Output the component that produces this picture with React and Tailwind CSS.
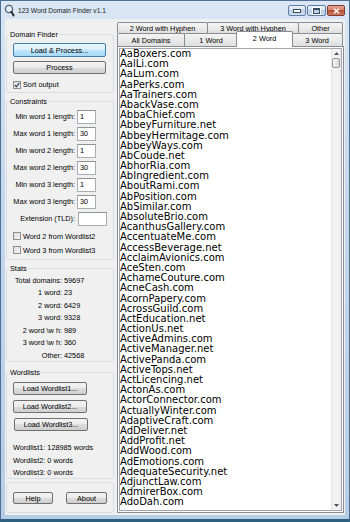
import React from "react";

const domains = [
  "AaBoxers.com","AalLi.com","AaLum.com","AaPerks.com","AaTrainers.com","AbackVase.com","AbbaChief.com","AbbeyFurniture.net","AbbeyHermitage.com","AbbeyWays.com","AbCoude.net","AbhorRia.com","AbIngredient.com","AboutRami.com","AbPosition.com","AbSimilar.com","AbsoluteBrio.com","AcanthusGallery.com","AccentuateMe.com","AccessBeverage.net","AcclaimAvionics.com","AceSten.com","AchameCouture.com","AcneCash.com","AcornPapery.com","AcrossGuild.com","ActEducation.net","ActionUs.net","ActiveAdmins.com","ActiveManager.net","ActivePanda.com","ActiveTops.net","ActLicencing.net","ActonAs.com","ActorConnector.com","ActuallyWinter.com","AdaptiveCraft.com","AdDeliver.net","AddProfit.net","AddWood.com","AdEmotions.com","AdequateSecurity.net","AdjunctLaw.com","AdmirerBox.com","AdoDah.com",
];

const constraints = [
  ["Min word 1 length:", "1"],
  ["Max word 1 length:", "30"],
  ["Min word 2 length:", "1"],
  ["Max word 2 length:", "30"],
  ["Min word 3 length:", "1"],
  ["Max word 3 length:", "30"],
];

const stats = [
  ["Total domains:", "59697"],
  ["1 word:", "23"],
  ["2 word:", "6429"],
  ["3 word:", "9328"],
  ["2 word \\w h:", "989"],
  ["3 word \\w h:", "360"],
  ["Other:", "42568"],
];

function Btn({ children, className = "", def = false }) {
  const skin = def
    ? "border-[#3c7fb1] bg-[linear-gradient(#eaf6fd,#d9f0fc_50%,#bee6fd_50%,#a7d9f5)]"
    : "border-[#707070] bg-[linear-gradient(#f2f2f2,#ebebeb_50%,#dddddd_50%,#cfcfcf)]";
  return (
    <div className={"flex items-center justify-center rounded-[2px] border " + skin + " " + className}>
      {children}
    </div>
  );
}

function Check({ checked, label, className = "" }) {
  return (
    <div className={"flex items-center " + className}>
      <div className="w-[8px] h-[8px] border border-[#8e8f8f] bg-[linear-gradient(135deg,#dcdcdc,#f6f6f6)] flex items-center justify-center">
        {checked && (
          <svg width="6" height="6" viewBox="0 0 6 6">
            <path d="M0.8 3.2 L2.4 4.8 L5.3 0.8" fill="none" stroke="#2b3e5a" strokeWidth="1.2" />
          </svg>
        )}
      </div>
      <span className="ml-[2px]">{label}</span>
    </div>
  );
}

function Field({ value, className = "" }) {
  return (
    <div className={"h-[14px] bg-white border border-[#abadb3] border-t-[#8e9296] flex items-center pl-[2px] " + className}>
      {value}
    </div>
  );
}

function Tab({ children, className = "" }) {
  return (
    <div className={"flex items-center justify-center border border-b-0 border-[#898c95] rounded-t-[2px] bg-[linear-gradient(#f3f3f3,#ebebeb_50%,#dedede)] " + className}>
      {children}
    </div>
  );
}

export default function App() {
  return (
    <div className="w-[350px] h-[522px] flex flex-col border border-[#4d6f92] border-b-[3px] border-b-[#2d5f80] bg-[linear-gradient(#dae6f4,#c3d6ec_40%,#b7cde7)] font-['Liberation_Sans',Arial,sans-serif] text-[7.3px] leading-[9px] text-black overflow-hidden">
      {/* Title bar */}
      <div className="h-[18px] flex items-start">
        <div className="ml-[3px] mt-[3px]">
          <svg width="11" height="13" viewBox="0 0 11 13">
            <circle cx="5" cy="5" r="3.6" fill="#e8eff7" stroke="#4f5f70" strokeWidth="1.3" />
            <path d="M7.4 7.8 L9.6 11.4" stroke="#2a2a2a" strokeWidth="2" strokeLinecap="round" />
          </svg>
        </div>
        <div className="ml-[3px] mt-[5px] text-[6.6px] leading-[9px] text-[#1a1a1a]">123 Word Domain Finder v1.1</div>
        <div className="ml-auto mr-[4px] mt-[4px] flex gap-[1px]">
          <div className="w-[18px] h-[11px] rounded-[2px] border border-[#5f7fa6] bg-[linear-gradient(#eaf1f9,#d3e0ef_50%,#bccfe6_50%,#cfdff0)] flex items-end justify-center pb-[2px]">
            <div className="w-[6px] h-[2px] bg-white border border-[#3b4b5e] box-content" />
          </div>
          <div className="w-[19px] h-[11px] rounded-[2px] border border-[#5f7fa6] bg-[linear-gradient(#eaf1f9,#d3e0ef_50%,#bccfe6_50%,#cfdff0)] flex items-center justify-center">
            <div className="w-[5px] h-[3px] border border-[#3b4b5e] border-t-2 bg-transparent box-content outline outline-1 outline-white" />
          </div>
          <div className="w-[18px] h-[11px] rounded-[2px] border border-[#7b3d31] bg-[linear-gradient(#e6a896,#cf7a64_50%,#b8533b_50%,#cc7a5f)] flex items-center justify-center">
            <svg width="7" height="6" viewBox="0 0 7 6">
              <path d="M1 0.8 L6 5.2 M6 0.8 L1 5.2" stroke="#ffffff" strokeWidth="1.5" />
            </svg>
          </div>
        </div>
      </div>

      {/* Client area */}
      <div className="flex-1 flex mx-[4px] mb-[4px] bg-[#f0f0f0]">
        {/* Left column */}
        <div className="w-[111px] pl-[1px] pr-[2px] pt-[11px] flex flex-col">
          <fieldset className="border border-[#d5dfe5] rounded-[3px] px-[6px] h-[63px] min-w-0">
            <legend className="-ml-[4px] px-[1px] leading-[9px]">Domain Finder</legend>
            <Btn def className="mt-[4px] h-[14px] w-[93px]">Load &amp; Process...</Btn>
            <Btn className="mt-[4px] h-[13px] w-[93px]">Process</Btn>
            <Check checked label="Sort output" className="mt-[6px] h-[9px]" />
          </fieldset>

          <fieldset className="mt-[4px] border border-[#d5dfe5] rounded-[3px] px-[6px] h-[163px] min-w-0">
            <legend className="-ml-[4px] px-[1px] leading-[9px]">Constraints</legend>
            <div className="mt-[2px]">
              {constraints.map(([l, v]) => (
                <div key={l} className="h-[17px] flex items-center">
                  <div className="w-[62px] text-right">{l}</div>
                  <Field value={v} className="ml-[2px] w-[19px]" />
                </div>
              ))}
              <div className="h-[17px] flex items-center">
                <div className="w-[62px] text-right">Extension (TLD):</div>
                <Field value="" className="ml-[3px] w-[29px]" />
              </div>
              <Check label="Word 2 from Wordlist2" className="mt-[2px] h-[14px]" />
              <Check label="Word 3 from Wordlist3" className="h-[14px]" />
            </div>
          </fieldset>

          <fieldset className="mt-[4px] border border-[#d5dfe5] rounded-[3px] px-[6px] h-[98px] min-w-0">
            <legend className="-ml-[4px] px-[1px] leading-[9px]">Stats</legend>
            <div className="mt-[1px]">
              {stats.map(([l, v]) => (
                <div key={l} className="h-[12.5px] flex items-center">
                  <div className="w-[49px] text-right">{l}</div>
                  <div className="ml-[2px]">{v}</div>
                </div>
              ))}
            </div>
          </fieldset>

          <fieldset className="mt-[6px] border border-[#d5dfe5] rounded-[3px] px-[6px] h-[111px] min-w-0">
            <legend className="-ml-[4px] px-[1px] leading-[9px]">Wordlists</legend>
            <Btn className="mt-[5px] h-[13px] w-[74px]">Load Wordlist1...</Btn>
            <Btn className="mt-[5px] h-[13px] w-[74px]">Load Wordlist2...</Btn>
            <Btn className="mt-[5px] h-[13px] w-[74px] ml-[1px]">Load Wordlist3...</Btn>
            <div className="mt-[10.5px]">
              <div className="h-[12.5px] flex items-center">Wordlist1: 128985 words</div>
              <div className="h-[12.5px] flex items-center">Wordlist2: 0 words</div>
              <div className="h-[12.5px] flex items-center">Wordlist3: 0 words</div>
            </div>
          </fieldset>

          <fieldset className="mt-[3px] border border-[#d5dfe5] rounded-[3px] px-[6px] h-[31px] min-w-0">
            <div className="mt-[9px] flex">
              <Btn className="h-[12px] w-[40px]">Help</Btn>
              <Btn className="h-[12px] w-[41px] ml-[13px]">About</Btn>
            </div>
          </fieldset>
        </div>

        {/* Right: tab control */}
        <div className="flex-1 flex flex-col pt-[3px] pl-[1px] pr-[1px]">
          <div className="h-[11px] flex">
            <Tab className="w-[91px]">2 Word with Hyphen</Tab>
            <Tab className="w-[92px] -ml-[1px]">3 Word with Hyphen</Tab>
            <Tab className="w-[45px] -ml-[1px]">Other</Tab>
          </div>
          <div className="h-[13px] flex items-end">
            <Tab className="w-[68px] h-[13px]">All Domains</Tab>
            <Tab className="w-[54px] h-[13px] -ml-[1px]">1 Word</Tab>
            <div className="relative z-10 w-[57px] h-[16px] -mb-[1px] -ml-[2px] flex items-center justify-center pb-[2px] border border-b-0 border-[#898c95] rounded-t-[2px] bg-white">
              2 Word
            </div>
            <Tab className="w-[52px] h-[13px] -ml-[2px]">3 Word</Tab>
          </div>
          <div className="flex-1 mb-[2px] border border-[#898c95] bg-white p-[1px] flex min-h-0">
            <div className="flex-1 border border-[#a3a8b0] flex min-h-0 overflow-hidden">
              <div className="flex-1 font-['DejaVu_Sans',sans-serif] text-[10px] leading-[10.2px] text-black whitespace-nowrap overflow-hidden">
                {domains.map((d) => (
                  <div key={d} className="h-[10.2px]">{d}</div>
                ))}
              </div>
              <div className="w-[10px] flex flex-col bg-[linear-gradient(to_right,#e3e3e3,#f3f3f3_25%,#f3f3f3_75%,#e6e6e6)]">
                <div className="h-[8px] flex items-center justify-center">
                  <svg width="5" height="3" viewBox="0 0 5 3"><path d="M0 3 L2.5 0 L5 3 Z" fill="#555" /></svg>
                </div>
                <div className="mx-[1px] mt-[1px] h-[10px] rounded-[2px] border border-[#979797] bg-[linear-gradient(to_right,#f4f4f4,#e9e9e9_50%,#d9d9d9)]" />
                <div className="flex-1" />
                <div className="h-[9px] flex items-center justify-center">
                  <svg width="5" height="3" viewBox="0 0 5 3"><path d="M0 0 L2.5 3 L5 0 Z" fill="#555" /></svg>
                </div>
              </div>
            </div>
          </div>
        </div>
      </div>
    </div>
  );
}
